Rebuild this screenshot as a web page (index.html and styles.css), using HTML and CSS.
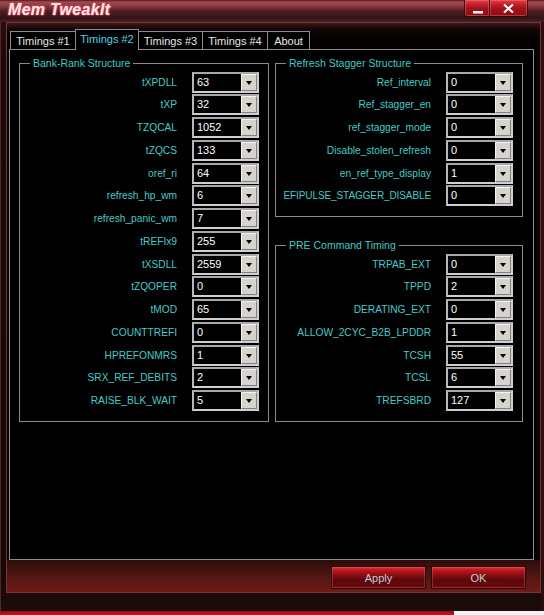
FILE: index.html
```html
<!DOCTYPE html>
<html>
<head>
<meta charset="utf-8">
<title>Mem TweakIt</title>
<link rel="stylesheet" href="styles.css">
</head>
<body>
<div class="screen">
  <div class="window">
    <div class="titlebar">
      <span class="title">Mem TweakIt</span>
      <div class="caption-btns">
        <span class="cbtn cmin"><svg width="25" height="17" viewBox="0 0 25 17"><rect x="8" y="11" width="10" height="2.5" fill="#fff"/></svg></span>
        <span class="cbtn cclose"><svg width="38" height="17" viewBox="0 0 38 17"><path d="M14 4.5 L23 12.5 M23 4.5 L14 12.5" stroke="#fff" stroke-width="2" fill="none"/></svg></span>
      </div>
    </div>
    <div class="client">
      <div class="tabs">
        <span class="tab w1">Timings #1</span>
        <span class="tab w2 active">Timings #2</span>
        <span class="tab w3">Timings #3</span>
        <span class="tab w4">Timings #4</span>
        <span class="tab w5">About</span>
      </div>
      <div class="panel">
        <fieldset class="group gleft">
          <legend>Bank-Rank Structure</legend>
          <div class="rows">
            <div class="row"><span class="lbl">tXPDLL</span><span class="combo"><span class="val">63</span><span class="drop"><i></i></span></span></div>
            <div class="row"><span class="lbl">tXP</span><span class="combo"><span class="val">32</span><span class="drop"><i></i></span></span></div>
            <div class="row"><span class="lbl">TZQCAL</span><span class="combo"><span class="val">1052</span><span class="drop"><i></i></span></span></div>
            <div class="row"><span class="lbl">tZQCS</span><span class="combo"><span class="val">133</span><span class="drop"><i></i></span></span></div>
            <div class="row"><span class="lbl">oref_ri</span><span class="combo"><span class="val">64</span><span class="drop"><i></i></span></span></div>
            <div class="row"><span class="lbl">refresh_hp_wm</span><span class="combo"><span class="val">6</span><span class="drop"><i></i></span></span></div>
            <div class="row"><span class="lbl">refresh_panic_wm</span><span class="combo"><span class="val">7</span><span class="drop"><i></i></span></span></div>
            <div class="row"><span class="lbl">tREFIx9</span><span class="combo"><span class="val">255</span><span class="drop"><i></i></span></span></div>
            <div class="row"><span class="lbl">tXSDLL</span><span class="combo"><span class="val">2559</span><span class="drop"><i></i></span></span></div>
            <div class="row"><span class="lbl">tZQOPER</span><span class="combo"><span class="val">0</span><span class="drop"><i></i></span></span></div>
            <div class="row"><span class="lbl">tMOD</span><span class="combo"><span class="val">65</span><span class="drop"><i></i></span></span></div>
            <div class="row"><span class="lbl">COUNTTREFI</span><span class="combo"><span class="val">0</span><span class="drop"><i></i></span></span></div>
            <div class="row"><span class="lbl">HPREFONMRS</span><span class="combo"><span class="val">1</span><span class="drop"><i></i></span></span></div>
            <div class="row"><span class="lbl">SRX_REF_DEBITS</span><span class="combo"><span class="val">2</span><span class="drop"><i></i></span></span></div>
            <div class="row"><span class="lbl">RAISE_BLK_WAIT</span><span class="combo"><span class="val">5</span><span class="drop"><i></i></span></span></div>
          </div>
        </fieldset>
        <div class="col">
          <fieldset class="group gright">
            <legend>Refresh Stagger Structure</legend>
            <div class="rows">
              <div class="row"><span class="lbl">Ref_interval</span><span class="combo"><span class="val">0</span><span class="drop"><i></i></span></span></div>
              <div class="row"><span class="lbl">Ref_stagger_en</span><span class="combo"><span class="val">0</span><span class="drop"><i></i></span></span></div>
              <div class="row"><span class="lbl">ref_stagger_mode</span><span class="combo"><span class="val">0</span><span class="drop"><i></i></span></span></div>
              <div class="row"><span class="lbl">Disable_stolen_refresh</span><span class="combo"><span class="val">0</span><span class="drop"><i></i></span></span></div>
              <div class="row"><span class="lbl">en_ref_type_display</span><span class="combo"><span class="val">1</span><span class="drop"><i></i></span></span></div>
              <div class="row"><span class="lbl narrow">EFIPULSE_STAGGER_DISABLE</span><span class="combo"><span class="val">0</span><span class="drop"><i></i></span></span></div>
            </div>
          </fieldset>
          <fieldset class="group gright second">
            <legend>PRE Command Timing</legend>
            <div class="rows">
              <div class="row"><span class="lbl">TRPAB_EXT</span><span class="combo"><span class="val">0</span><span class="drop"><i></i></span></span></div>
              <div class="row"><span class="lbl">TPPD</span><span class="combo"><span class="val">2</span><span class="drop"><i></i></span></span></div>
              <div class="row"><span class="lbl">DERATING_EXT</span><span class="combo"><span class="val">0</span><span class="drop"><i></i></span></span></div>
              <div class="row"><span class="lbl">ALLOW_2CYC_B2B_LPDDR</span><span class="combo"><span class="val">1</span><span class="drop"><i></i></span></span></div>
              <div class="row"><span class="lbl">TCSH</span><span class="combo"><span class="val">55</span><span class="drop"><i></i></span></span></div>
              <div class="row"><span class="lbl">TCSL</span><span class="combo"><span class="val">6</span><span class="drop"><i></i></span></span></div>
              <div class="row"><span class="lbl">TREFSBRD</span><span class="combo"><span class="val">127</span><span class="drop"><i></i></span></span></div>
            </div>
          </fieldset>
        </div>
      </div>
      <div class="btnbar">
        <button class="btn">Apply</button>
        <button class="btn">OK</button>
      </div>
    </div>
  </div>
  <div class="taskbar"><span class="tb-red"></span><span class="tb-white"></span></div>
</div>
</body>
</html>
```

FILE: styles.css
```css
html, body {
  margin: 0;
  padding: 0;
  background: #000;
}
body {
  width: 544px;
  height: 615px;
  overflow: hidden;
  font-family: "Liberation Sans", Arial, sans-serif;
}
.screen {
  width: 544px;
  height: 615px;
  display: flex;
  flex-direction: column;
}
.window {
  height: 611px;
  background: linear-gradient(to bottom, #2a1212 0, #1a0a0a 60px, #140808 560px, #1c0c0c 611px);
  box-shadow: inset 1px 0 0 #5a2424, inset -3px 0 0 #2a0e0e;
  display: flex;
  flex-direction: column;
}
.titlebar {
  height: 22px;
  flex: none;
  display: flex;
  justify-content: space-between;
  align-items: flex-start;
  background: linear-gradient(to bottom, #4a1a1e 0, #a24a52 2px, #8a3a40 6px, #4e1e22 11px, #321416 18px, #4a2020 22px);
}
.title {
  margin: 1px 0 0 8px;
  font-size: 16px;
  line-height: 18px;
  font-weight: bold;
  font-style: italic;
  letter-spacing: 0.3px;
  color: #fbe8ea;
  text-shadow: 0 0 2px #ff5a6a, 0 0 3px #c02838, 0 0 1px #ff8090;
}
.caption-btns {
  display: flex;
  margin-right: 16px;
}
.cbtn {
  display: block;
  height: 17px;
  box-sizing: border-box;
  border: 1px solid #3c0608;
  border-top: none;
  background: linear-gradient(to bottom, #e0404a 0, #c01c26 5px, #a0121a 9px, #8a0c12 17px);
  box-shadow: inset 0 0 0 1px rgba(255, 140, 150, 0.35);
}
.cbtn svg { display: block; }
.cmin { width: 25px; border-radius: 0 0 0 3px; border-right: none; }
.cclose { width: 39px; border-radius: 0 0 3px 0; }

.client {
  margin-left: 6px;
  width: 535px;
  height: 571px;
  box-sizing: border-box;
  border: 1px solid #7a3434;
  background: linear-gradient(to bottom, #3a1818 0, #140606 6px, #050101 14px, #050101 100%);
  display: flex;
  flex-direction: column;
}
.tabs {
  display: flex;
  align-items: flex-end;
  height: 20px;
  margin: 6px 0 0 3px;
}
.tab {
  display: block;
  box-sizing: border-box;
  height: 18px;
  margin-right: -1px;
  border: 1px solid #8c8c8c;
  border-bottom: none;
  background: #000;
  color: #e6e6e6;
  font-size: 11px;
  line-height: 18px;
  text-align: center;
}
.tab.w1 { width: 66px; }
.tab.w2 { width: 64px; }
.tab.w3 { width: 65px; }
.tab.w4 { width: 66px; }
.tab.w5 { width: 43px; }
.tab.active {
  height: 21px;
  margin-bottom: -1px;
  position: relative;
  z-index: 1;
  color: #4fd2e2;
  line-height: 18px;
}
.panel {
  margin-left: 2px;
  width: 525px;
  height: 511px;
  box-sizing: border-box;
  border: 1px solid #8c8c8c;
  background: #000;
  padding: 7px 10px 0 9px;
  display: flex;
  gap: 6px;
  align-items: flex-start;
  flex: none;
}
.col {
  display: flex;
  flex-direction: column;
}
.group {
  margin: 0;
  padding: 0 9px 10px 0;
  border: 1px solid #8a8a8a;
  box-sizing: border-box;
  min-width: 0;
}
.gleft { width: 250px; }
.gright { width: 248px; }
.gright.second { margin-top: 21.75px; }
.group legend {
  margin-left: 10px;
  padding: 0 3px;
  font-size: 10.5px;
  line-height: 13px;
  color: #45cac4;
}
.rows {
  display: flex;
  flex-direction: column;
  gap: 1.75px;
  padding-top: 1.5px;
}
.row {
  display: flex;
  justify-content: flex-end;
  align-items: center;
  gap: 15px;
  height: 21px;
}
.lbl {
  font-size: 10.2px;
  color: #45cac8;
  white-space: nowrap;
}
.lbl.narrow {
  font-size: 10px;
  letter-spacing: -0.1px;
}
.combo {
  flex: none;
  width: 67px;
  height: 21px;
  box-sizing: border-box;
  border: 2px solid #cfcfcf;
  border-top-color: #a8a8a8;
  border-left-color: #b8b8b8;
  background: #000;
  display: flex;
}
.val {
  flex: 1;
  color: #fff;
  font-size: 11px;
  line-height: 16px;
  padding-left: 3px;
}
.drop {
  width: 16px;
  box-sizing: border-box;
  background: #d6d3cc;
  border: 1px solid;
  border-color: #f4f4f4 #808080 #808080 #f4f4f4;
  display: flex;
  align-items: center;
  justify-content: center;
}
.drop i {
  display: block;
  width: 0;
  height: 0;
  border-left: 3.5px solid transparent;
  border-right: 3.5px solid transparent;
  border-top: 4px solid #000;
  margin-top: 1px;
}
.btnbar {
  flex: 1;
  display: flex;
  justify-content: flex-end;
  align-items: flex-start;
  gap: 5px;
  padding: 6px 14px 0 0;
  background: linear-gradient(to bottom, #2a0c0a 0, #3e120f 8px, #5a1812 20px, #6c1b14 32px);
}
.btn {
  width: 95px;
  height: 23px;
  margin: 0;
  padding: 0;
  box-sizing: border-box;
  border: 1px solid #1e0204;
  border-radius: 1px;
  background: linear-gradient(to bottom, #e8343c 0, #c01820 3px, #8a0e14 8px, #5a080c 13px, #62090d 19px, #8a1016 23px);
  box-shadow: inset 0 0 0 1px rgba(255, 90, 100, 0.35);
  color: #c8c8d8;
  font-family: "Liberation Sans", Arial, sans-serif;
  font-size: 11px;
  line-height: 20px;
}
.taskbar {
  height: 4px;
  display: flex;
}
.tb-red {
  width: 454px;
  background: linear-gradient(to bottom, #8a1018, #d0101a);
}
.tb-white {
  flex: 1;
  background: #f2f2f2;
}
```
